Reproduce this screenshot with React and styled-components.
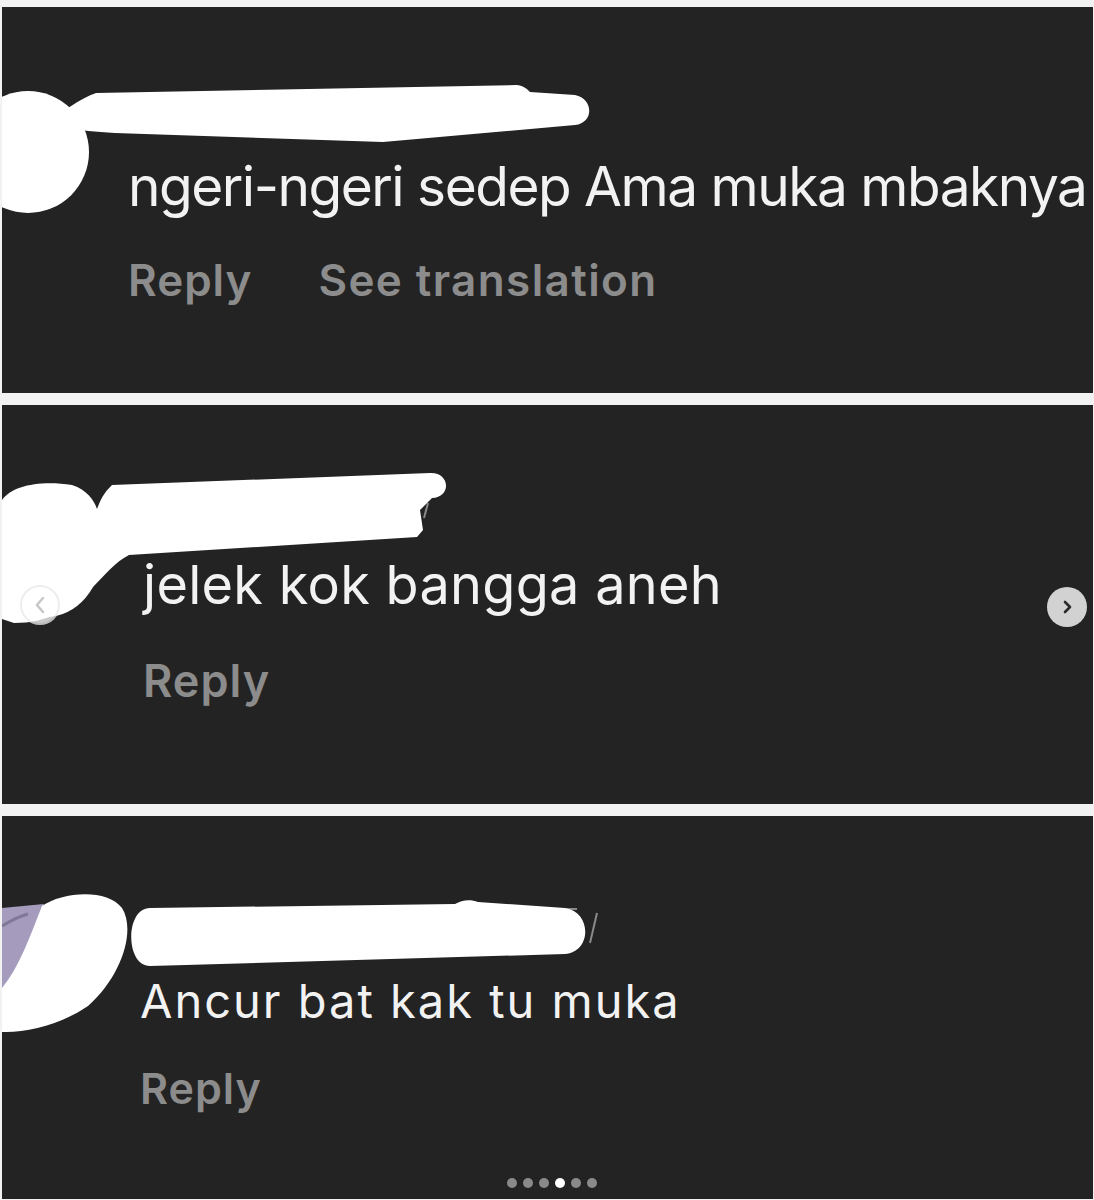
import React from "react";
import styled, { createGlobalStyle } from "styled-components";

const Global = createGlobalStyle`
  html, body { margin: 0; padding: 0; background: #f2f2f2; }
  body { font-family: Inter, "Noto Sans", "Liberation Sans", sans-serif; }
`;

const Page = styled.div`
  width: 1094px;
  height: 1200px;
  overflow: hidden;
  display: flex;
  flex-direction: column;
  gap: 12px;
  padding: 7px 1px 0 2px;
  box-sizing: border-box;
`;

const Panel = styled.section`
  position: relative;
  flex: 0 0 ${(p) => p.$h}px;
  background: #232323;
  overflow: hidden;
`;

const Body = styled.div`
  display: flex;
  flex-direction: column;
  padding-top: ${(p) => p.$top}px;
  padding-left: ${(p) => p.$left}px;
`;

const CommentText = styled.p`
  margin: 0;
  color: #f2f2f2;
  font-size: ${(p) => p.$size}px;
  line-height: 1;
  font-weight: 400;
  letter-spacing: ${(p) => p.$ls || 0}px;
  white-space: nowrap;
`;

const Actions = styled.div`
  display: flex;
  gap: ${(p) => p.$gap}px;
  margin-top: ${(p) => p.$mt}px;
`;

const Action = styled.span`
  color: #8c8c8c;
  font-size: ${(p) => p.$size}px;
  line-height: 1;
  font-weight: 600;
  letter-spacing: ${(p) => p.$ls}px;
  white-space: nowrap;
`;

const Censor = styled.svg`
  position: absolute;
  left: 0;
  top: 0;
  width: 100%;
  height: 100%;
  pointer-events: none;
`;

const NavButton = styled.div`
  position: absolute;
  top: ${(p) => p.$y - 20}px;
  left: ${(p) => p.$x - 20}px;
  width: 40px;
  height: 40px;
  border-radius: 50%;
  background: #d2d2d2;
  display: flex;
  align-items: center;
  justify-content: center;
`;

const Dots = styled.div`
  position: absolute;
  bottom: 11px;
  left: 505px;
  display: flex;
  gap: 6px;
`;

const Dot = styled.span`
  width: 10px;
  height: 10px;
  border-radius: 50%;
  background: ${(p) => (p.$active ? "#ffffff" : "#8a8a8a")};
`;

export default function App() {
  return (
    <>
      <Global />
      <Page>
        <Panel $h={386}>
          <Body $top={152} $left={126}>
            <CommentText $size={55} $ls={-1.5}>ngeri-ngeri sedep Ama muka mbaknya</CommentText>
            <Actions $gap={66} $mt={44}>
              <Action $size={44} $ls={1}>Reply</Action>
              <Action $size={44} $ls={1.4}>See translation</Action>
            </Actions>
          </Body>
          <Censor viewBox="0 0 1091 386">
            <circle cx="26" cy="145" r="61" fill="#fff" />
            <path
              d="M 66 101 C 78 93, 88 88, 94 86 L 515 78 C 523 79, 526 83, 528 85 L 573 88 C 592 92, 592 116, 573 118 L 381 135 L 113 126 C 93 125, 78 123, 66 121 Z"
              fill="#fff"
            />
          </Censor>
        </Panel>

        <Panel $h={399}>
          <Body $top={153} $left={141}>
            <CommentText $size={54} $ls={0.3}>jelek kok bangga aneh</CommentText>
            <Actions $gap={60} $mt={46}>
              <Action $size={45} $ls={1}>Reply</Action>
            </Actions>
          </Body>
          <Censor viewBox="0 0 1091 399">
            <circle cx="38" cy="200" r="20" fill="#c9c9c9" />
            <line x1="426" y1="98" x2="422" y2="113" stroke="#8a8a8a" strokeWidth="2" />
            <ellipse cx="44" cy="146" rx="56" ry="66" fill="#fff" />
            <path
              d="M 0 95 C 10 80, 40 75, 70 80 C 85 85, 92 95, 95 104 C 100 90, 105 85, 110 80 L 428 68 C 448 67, 450 92, 430 93 L 418 105 L 421 125 L 415 132 L 127 150 C 113 157, 103 170, 88 185 C 68 205, 45 218, 12 218 L 0 214 Z"
              fill="#fff"
            />
            <circle cx="38" cy="200" r="19" fill="none" stroke="rgba(0,0,0,0.07)" strokeWidth="2" />
            <path d="M 41 193 L 35 200 L 41 207" fill="none" stroke="rgba(0,0,0,0.22)" strokeWidth="2.5" strokeLinecap="round" />
          </Censor>
          <NavButton $x={1065} $y={202}>
            <svg width="16" height="16" viewBox="0 0 16 16">
              <path d="M 6 3 L 11 8 L 6 13" fill="none" stroke="#2a2a2a" strokeWidth="2.6" strokeLinecap="round" strokeLinejoin="round" />
            </svg>
          </NavButton>
        </Panel>

        <Panel $h={383}>
          <Body $top={161} $left={138}>
            <CommentText $size={47} $ls={2}>Ancur bat kak tu muka</CommentText>
            <Actions $gap={60} $mt={43}>
              <Action $size={43} $ls={1}>Reply</Action>
            </Actions>
          </Body>
          <Censor viewBox="0 0 1091 383">
            <path d="M 0 92 L 42 88 C 30 120, 20 150, 0 178 Z" fill="#a59cbd" />
            <path d="M 0 110 C 10 104, 18 100, 26 98" fill="none" stroke="#7f7896" strokeWidth="3" />
            <path
              d="M 40 90 C 60 76, 105 72, 120 92 C 134 114, 120 160, 86 190 C 60 208, 25 217, 0 216 L 0 172 C 18 150, 28 120, 40 90 Z"
              fill="#fff"
            />
            <line x1="595" y1="97" x2="588" y2="127" stroke="#8a8a8a" strokeWidth="2" />
            <line x1="555" y1="93" x2="575" y2="93" stroke="#8a8a8a" strokeWidth="2" />
            <path
              d="M 148 92 L 453 88 C 460 84, 468 83, 476 86 L 563 92 C 590 96, 590 136, 563 138 L 148 150 C 123 150, 123 92, 148 92 Z"
              fill="#fff"
            />
          </Censor>
          <Dots>
            <Dot />
            <Dot />
            <Dot />
            <Dot $active />
            <Dot />
            <Dot />
          </Dots>
        </Panel>
      </Page>
    </>
  );
}
